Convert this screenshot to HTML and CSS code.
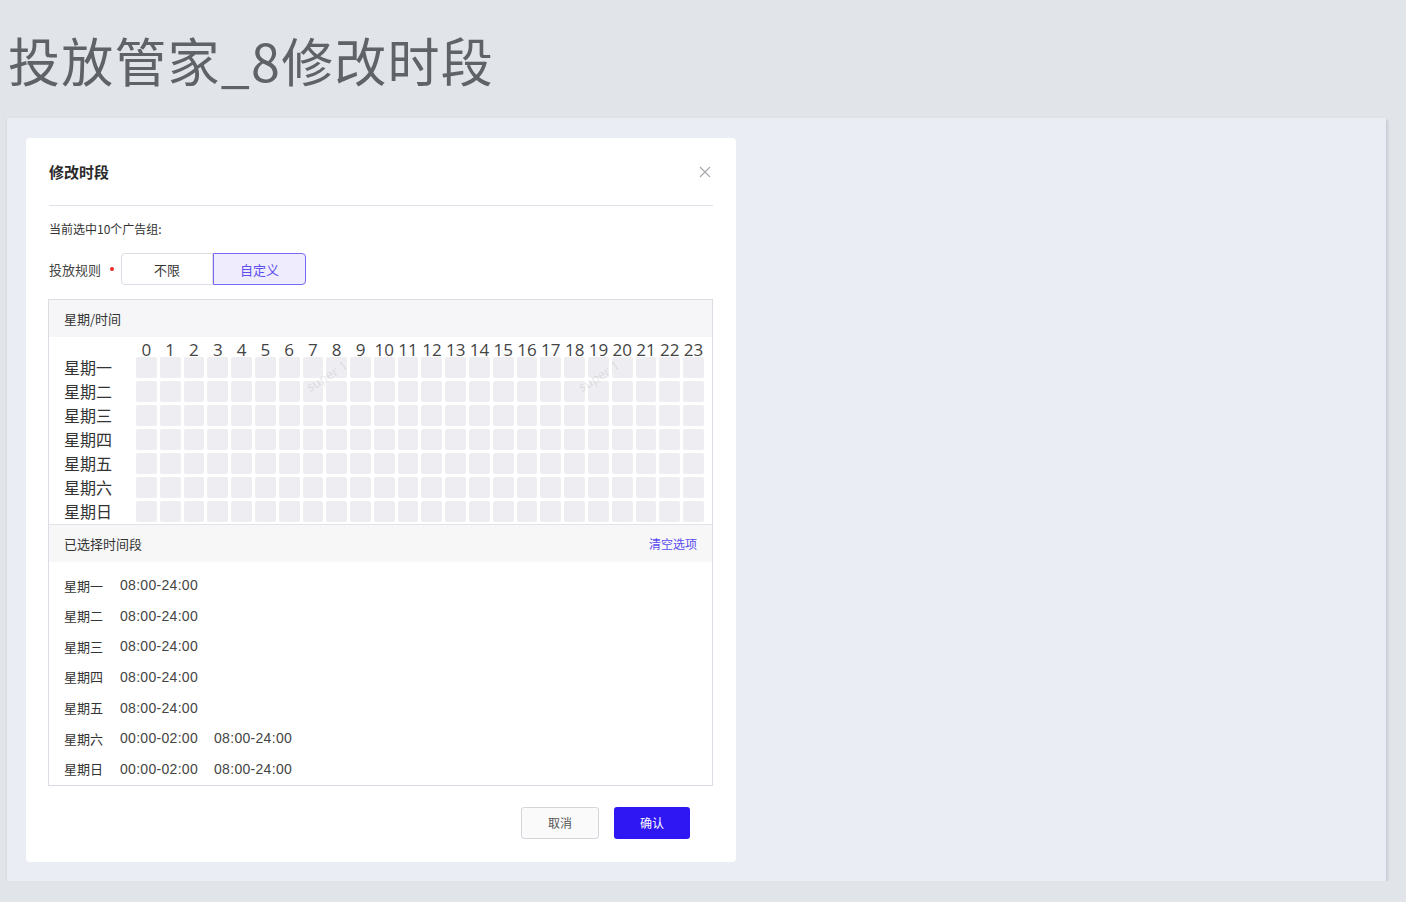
FILE: index.html
```html
<!DOCTYPE html>
<html lang="zh-CN">
<head>
<meta charset="utf-8">
<title>投放管家_8修改时段</title>
<link rel="stylesheet" href="styles.css">
</head>
<body>
<h1 class="page-title">投放管家_8修改时段</h1>
<div class="panel">
  <div class="dialog">
    <div class="dialog-header">
      <span class="dialog-title">修改时段</span>
      <svg class="close" width="12" height="12" viewBox="0 0 12 12"><path d="M1 1L11 11M11 1L1 11" stroke="#a8a8ad" stroke-width="1.2" fill="none"/></svg>
    </div>
    <div class="selected-count">当前选中10个广告组:</div>
    <div class="rule-row">
      <span class="rule-label">投放规则</span>
      <span class="req-dot"></span>
      <div class="seg">
        <span class="seg-btn">不限</span>
        <span class="seg-btn active">自定义</span>
      </div>
    </div>
    <div class="week-table">
      <div class="wt-head">星期/时间</div>
      <div class="wt-grid">
        <span class="wm wm-1">super 1</span>
        <span class="wm wm-2">super 1</span>
        <span class="corner"></span>
        <span class="hr">0</span><span class="hr">1</span><span class="hr">2</span><span class="hr">3</span><span class="hr">4</span><span class="hr">5</span><span class="hr">6</span><span class="hr">7</span><span class="hr">8</span><span class="hr">9</span><span class="hr">10</span><span class="hr">11</span><span class="hr">12</span><span class="hr">13</span><span class="hr">14</span><span class="hr">15</span><span class="hr">16</span><span class="hr">17</span><span class="hr">18</span><span class="hr">19</span><span class="hr">20</span><span class="hr">21</span><span class="hr">22</span><span class="hr">23</span>
      </div>
      <div class="sel-head">
        <span>已选择时间段</span>
        <span class="clear">清空选项</span>
      </div>
      <div class="sel-list">
        <div class="sel-row"><span class="sel-day">星期一</span><span class="sel-time">08:00-24:00</span></div>
        <div class="sel-row"><span class="sel-day">星期二</span><span class="sel-time">08:00-24:00</span></div>
        <div class="sel-row"><span class="sel-day">星期三</span><span class="sel-time">08:00-24:00</span></div>
        <div class="sel-row"><span class="sel-day">星期四</span><span class="sel-time">08:00-24:00</span></div>
        <div class="sel-row"><span class="sel-day">星期五</span><span class="sel-time">08:00-24:00</span></div>
        <div class="sel-row"><span class="sel-day">星期六</span><span class="sel-time">00:00-02:00</span><span class="sel-time">08:00-24:00</span></div>
        <div class="sel-row"><span class="sel-day">星期日</span><span class="sel-time">00:00-02:00</span><span class="sel-time">08:00-24:00</span></div>
      </div>
    </div>
    <div class="dialog-footer">
      <button class="btn btn-cancel">取消</button>
      <button class="btn btn-ok">确认</button>
    </div>
  </div>
</div>
<script>
(function () {
  var grid = document.querySelector('.wt-grid');
  var days = ['星期一','星期二','星期三','星期四','星期五','星期六','星期日'];
  days.forEach(function (d) {
    var l = document.createElement('span');
    l.className = 'day';
    l.textContent = d;
    grid.appendChild(l);
    for (var i = 0; i < 24; i++) {
      var c = document.createElement('span');
      c.className = 'cell';
      grid.appendChild(c);
    }
  });
})();
</script>
</body>
</html>
```

FILE: styles.css
```css
* { box-sizing: border-box; }

body {
  margin: 0;
  background: #e1e4e8;
  font-family: "Liberation Sans", "Noto Sans CJK SC", sans-serif;
  color: #333;
}

.page-title {
  margin: 0;
  padding: 34px 0 0 8px;
  font-family: "Noto Sans CJK SC", sans-serif;
  font-size: 52px;
  line-height: 52px;
  font-weight: 400;
  letter-spacing: 1.2px;
  color: #5f6266;
}

.panel {
  margin: 32px 0 0 7px;
  width: 1379px;
  height: 763px;
  background: #eaedf3;
  box-shadow: 1px 2px 3px rgba(70, 80, 110, 0.25);
  padding: 20px 19px;
}

.dialog {
  width: 710px;
  height: 724px;
  background: #fff;
  border-radius: 4px;
  padding: 0 23px;
}

.dialog-header {
  height: 68px;
  display: flex;
  align-items: center;
  justify-content: space-between;
  border-bottom: 1px solid #e0dfe9;
}

.dialog-title {
  font-family: "Noto Sans CJK SC", sans-serif;
  font-size: 15px;
  font-weight: 700;
  color: #2a2a2a;
}

.close { margin-right: 2px; }

.selected-count {
  margin-top: 13px;
  font-family: "Noto Sans CJK SC", sans-serif;
  font-size: 12px;
  line-height: 20px;
  color: #333;
}

.rule-row {
  margin-top: 14px;
  height: 32px;
  display: flex;
  align-items: center;
}

.rule-label {
  width: 52px;
  font-family: "Noto Sans CJK SC", sans-serif;
  font-size: 13px;
  color: #444;
}

.req-dot {
  width: 4px;
  height: 4px;
  border-radius: 50%;
  background: #ee2a2a;
  margin: 0 7px 0 9px;
}

.seg { display: flex; }

.seg-btn {
  width: 92px;
  height: 32px;
  display: flex;
  align-items: center;
  justify-content: center;
  border: 1px solid #dcdce6;
  border-radius: 4px 0 0 4px;
  font-family: "Noto Sans CJK SC", sans-serif;
  font-size: 13px;
  color: #333;
  background: #fff;
}

.seg-btn.active {
  width: 93px;
  border: 1.5px solid #7669f5;
  border-radius: 0 4px 4px 0;
  background: #eeecfd;
  color: #5d4ef0;
}

.week-table {
  margin: 14px 0 0 -1px;
  border: 1px solid #dcdce4;
}

.wt-head {
  height: 37px;
  display: flex;
  align-items: center;
  padding-left: 15px;
  background: #f6f6f8;
  font-family: "Noto Sans CJK SC", sans-serif;
  font-size: 13px;
  color: #333;
}

.wt-grid {
  position: relative;
  display: grid;
  grid-template-columns: 69px repeat(24, 1fr);
  grid-template-rows: 17px repeat(7, 21px);
  column-gap: 3px;
  row-gap: 3px;
  padding: 0 8px 2px 15px;
}

.hr {
  text-align: center;
  font-family: "Open Sans", sans-serif;
  font-size: 17px;
  line-height: 25px;
  color: #444;
  white-space: nowrap;
}

.day {
  font-family: "Noto Sans CJK SC", sans-serif;
  font-size: 16px;
  line-height: 21px;
  color: #333;
  white-space: nowrap;
}

.cell {
  background: #eeeef2;
  border-radius: 2px;
}

.wm {
  position: absolute;
  font-family: "Open Sans", sans-serif;
  font-size: 13px;
  color: rgba(0, 0, 0, 0.11);
  transform: rotate(-32deg);
  pointer-events: none;
  white-space: nowrap;
  z-index: 1;
}
.wm-1 { left: 255px; top: 30px; }
.wm-2 { left: 527px; top: 30px; }

.sel-head {
  height: 38px;
  display: flex;
  align-items: center;
  justify-content: space-between;
  padding: 0 15px;
  background: #f7f7f8;
  border-top: 1px solid #e2e2ea;
  font-family: "Noto Sans CJK SC", sans-serif;
  font-size: 13px;
  color: #333;
}

.clear {
  font-size: 12px;
  color: #5a4cf0;
}

.sel-list {
  padding: 13px 15px 6px;
  display: flex;
  flex-direction: column;
  gap: 10.67px;
}

.sel-row {
  display: flex;
  align-items: center;
  height: 20px;
  gap: 16px;
}

.sel-day {
  width: 40px;
  font-family: "Noto Sans CJK SC", sans-serif;
  font-size: 13px;
  line-height: 19px;
  color: #333;
}

.sel-time {
  font-size: 14px;
  letter-spacing: 0.3px;
  color: #444;
}

.dialog-footer {
  margin-top: 21px;
  display: flex;
  justify-content: flex-end;
  gap: 15px;
  padding-right: 23px;
}

.btn {
  height: 32px;
  border-radius: 3px;
  font-family: "Noto Sans CJK SC", sans-serif;
  font-size: 12px;
  padding: 0;
  cursor: pointer;
}

.btn-cancel {
  width: 78px;
  border: 1px solid #d4d4da;
  background: #fafafa;
  color: #555;
}

.btn-ok {
  width: 76px;
  border: none;
  background: #2f17f4;
  color: #fff;
}
```
